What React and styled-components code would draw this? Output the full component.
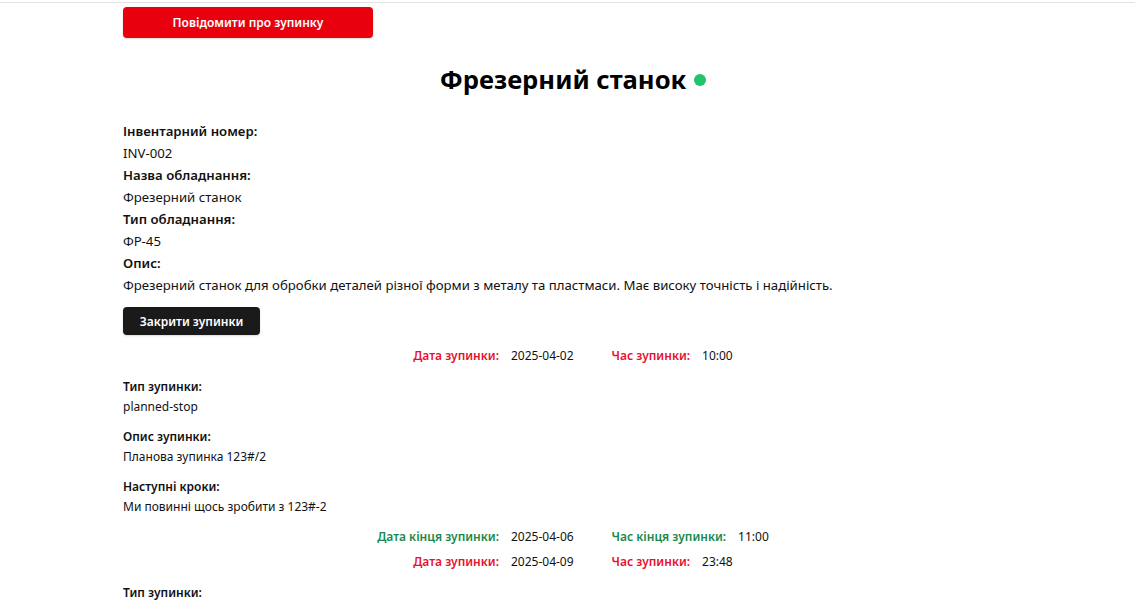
import React from "react";
import styled, { createGlobalStyle } from "styled-components";

const GlobalStyle = createGlobalStyle`
  html, body { margin: 0; padding: 0; background: #fff; }
  body { font-family: "Noto Sans", "Open Sans", Arial, sans-serif; color: #111; }
`;

const TopBar = styled.div`
  height: 2px;
  border-bottom: 1px solid #e2e2e2;
`;

const Page = styled.main`
  width: 900px;
  margin-left: 123px;
  padding-top: 4px;
  display: flex;
  flex-direction: column;
  align-items: stretch;
`;

const Button = styled.button`
  font-family: inherit;
  border: none;
  border-radius: 4px;
  color: #fff;
  font-weight: 600;
  font-size: 12px;
  cursor: pointer;
  align-self: flex-start;
  background: ${(p) => (p.$variant === "danger" ? "#e8000f" : "#1a1a1a")};
  width: ${(p) => (p.$variant === "danger" ? "250px" : "137px")};
  height: ${(p) => (p.$variant === "danger" ? "31px" : "28px")};
  box-shadow: 0 1px 2px rgba(0,0,0,0.15);
  margin-top: ${(p) => p.$mt || 0}px;
`;

const TitleRow = styled.h1`
  margin: 26px 0 0;
  display: flex;
  align-items: center;
  justify-content: center;
  gap: 8px;
  font-size: 25.6px;
  line-height: 32px;
  font-weight: 700;
  color: #000;
`;

const StatusDot = styled.span`
  width: 12px;
  height: 12px;
  border-radius: 50%;
  background: #22c36a;
  display: inline-block;
`;

const InfoList = styled.dl`
  margin: 24px 0 0;
  font-size: 13.2px;
  line-height: 22px;
`;

const InfoLabel = styled.dt`
  font-weight: 600;
`;

const InfoValue = styled.dd`
  margin: 0;
`;

const Stop = styled.section`
  display: flex;
  flex-direction: column;
  margin-top: ${(p) => p.$mt}px;
`;

const DateRow = styled.div`
  display: flex;
  justify-content: center;
  gap: 38px;
  font-size: 12px;
  line-height: 20px;
  margin-top: ${(p) => p.$mt || 0}px;
`;

const DateItem = styled.div`
  display: flex;
  gap: 12px;
`;

const DateLabel = styled.span`
  font-weight: 600;
  color: ${(p) => (p.$end ? "#198a4c" : "#e8112d")};
`;

const Field = styled.div`
  margin-top: ${(p) => p.$mt || 10}px;
  font-size: 12px;
  line-height: 20px;
`;

const FieldLabel = styled.div`
  font-weight: 600;
`;

const FieldValue = styled.div``;

const info = [
  ["Інвентарний номер:", "INV-002"],
  ["Назва обладнання:", "Фрезерний станок"],
  ["Тип обладнання:", "ФР-45"],
  [
    "Опис:",
    "Фрезерний станок для обробки деталей різної форми з металу та пластмаси. Має високу точність і надійність.",
  ],
];

const stops = [
  {
    date: "2025-04-02",
    time: "10:00",
    fields: [
      ["Тип зупинки:", "planned-stop"],
      ["Опис зупинки:", "Планова зупинка 123#/2"],
      ["Наступні кроки:", "Ми повинні щось зробити з 123#-2"],
    ],
    endDate: "2025-04-06",
    endTime: "11:00",
  },
  {
    date: "2025-04-09",
    time: "23:48",
    fields: [["Тип зупинки:", "planned-stop"]],
  },
];

function DateLine({ end, date, time, mt }) {
  return (
    <DateRow $mt={mt}>
      <DateItem>
        <DateLabel $end={end}>{end ? "Дата кінця зупинки:" : "Дата зупинки:"}</DateLabel>
        <span>{date}</span>
      </DateItem>
      <DateItem>
        <DateLabel $end={end}>{end ? "Час кінця зупинки:" : "Час зупинки:"}</DateLabel>
        <span>{time}</span>
      </DateItem>
    </DateRow>
  );
}

export default function App() {
  return (
    <>
      <GlobalStyle />
      <TopBar />
      <Page>
        <Button $variant="danger">Повідомити про зупинку</Button>
        <TitleRow>
          Фрезерний станок <StatusDot />
        </TitleRow>
        <InfoList>
          {info.map(([l, v]) => (
            <React.Fragment key={l}>
              <InfoLabel>{l}</InfoLabel>
              <InfoValue>{v}</InfoValue>
            </React.Fragment>
          ))}
        </InfoList>
        <Button $mt={11}>Закрити зупинки</Button>
        {stops.map((s, i) => (
          <Stop key={i} $mt={i === 0 ? 11 : 5}>
            <DateLine date={s.date} time={s.time} />
            {s.fields.map(([l, v], j) => (
              <Field key={l} $mt={j === 0 ? 11 : 10}>
                <FieldLabel>{l}</FieldLabel>
                <FieldValue>{v}</FieldValue>
              </Field>
            ))}
            {s.endDate && <DateLine end date={s.endDate} time={s.endTime} mt={10} />}
          </Stop>
        ))}
      </Page>
    </>
  );
}
